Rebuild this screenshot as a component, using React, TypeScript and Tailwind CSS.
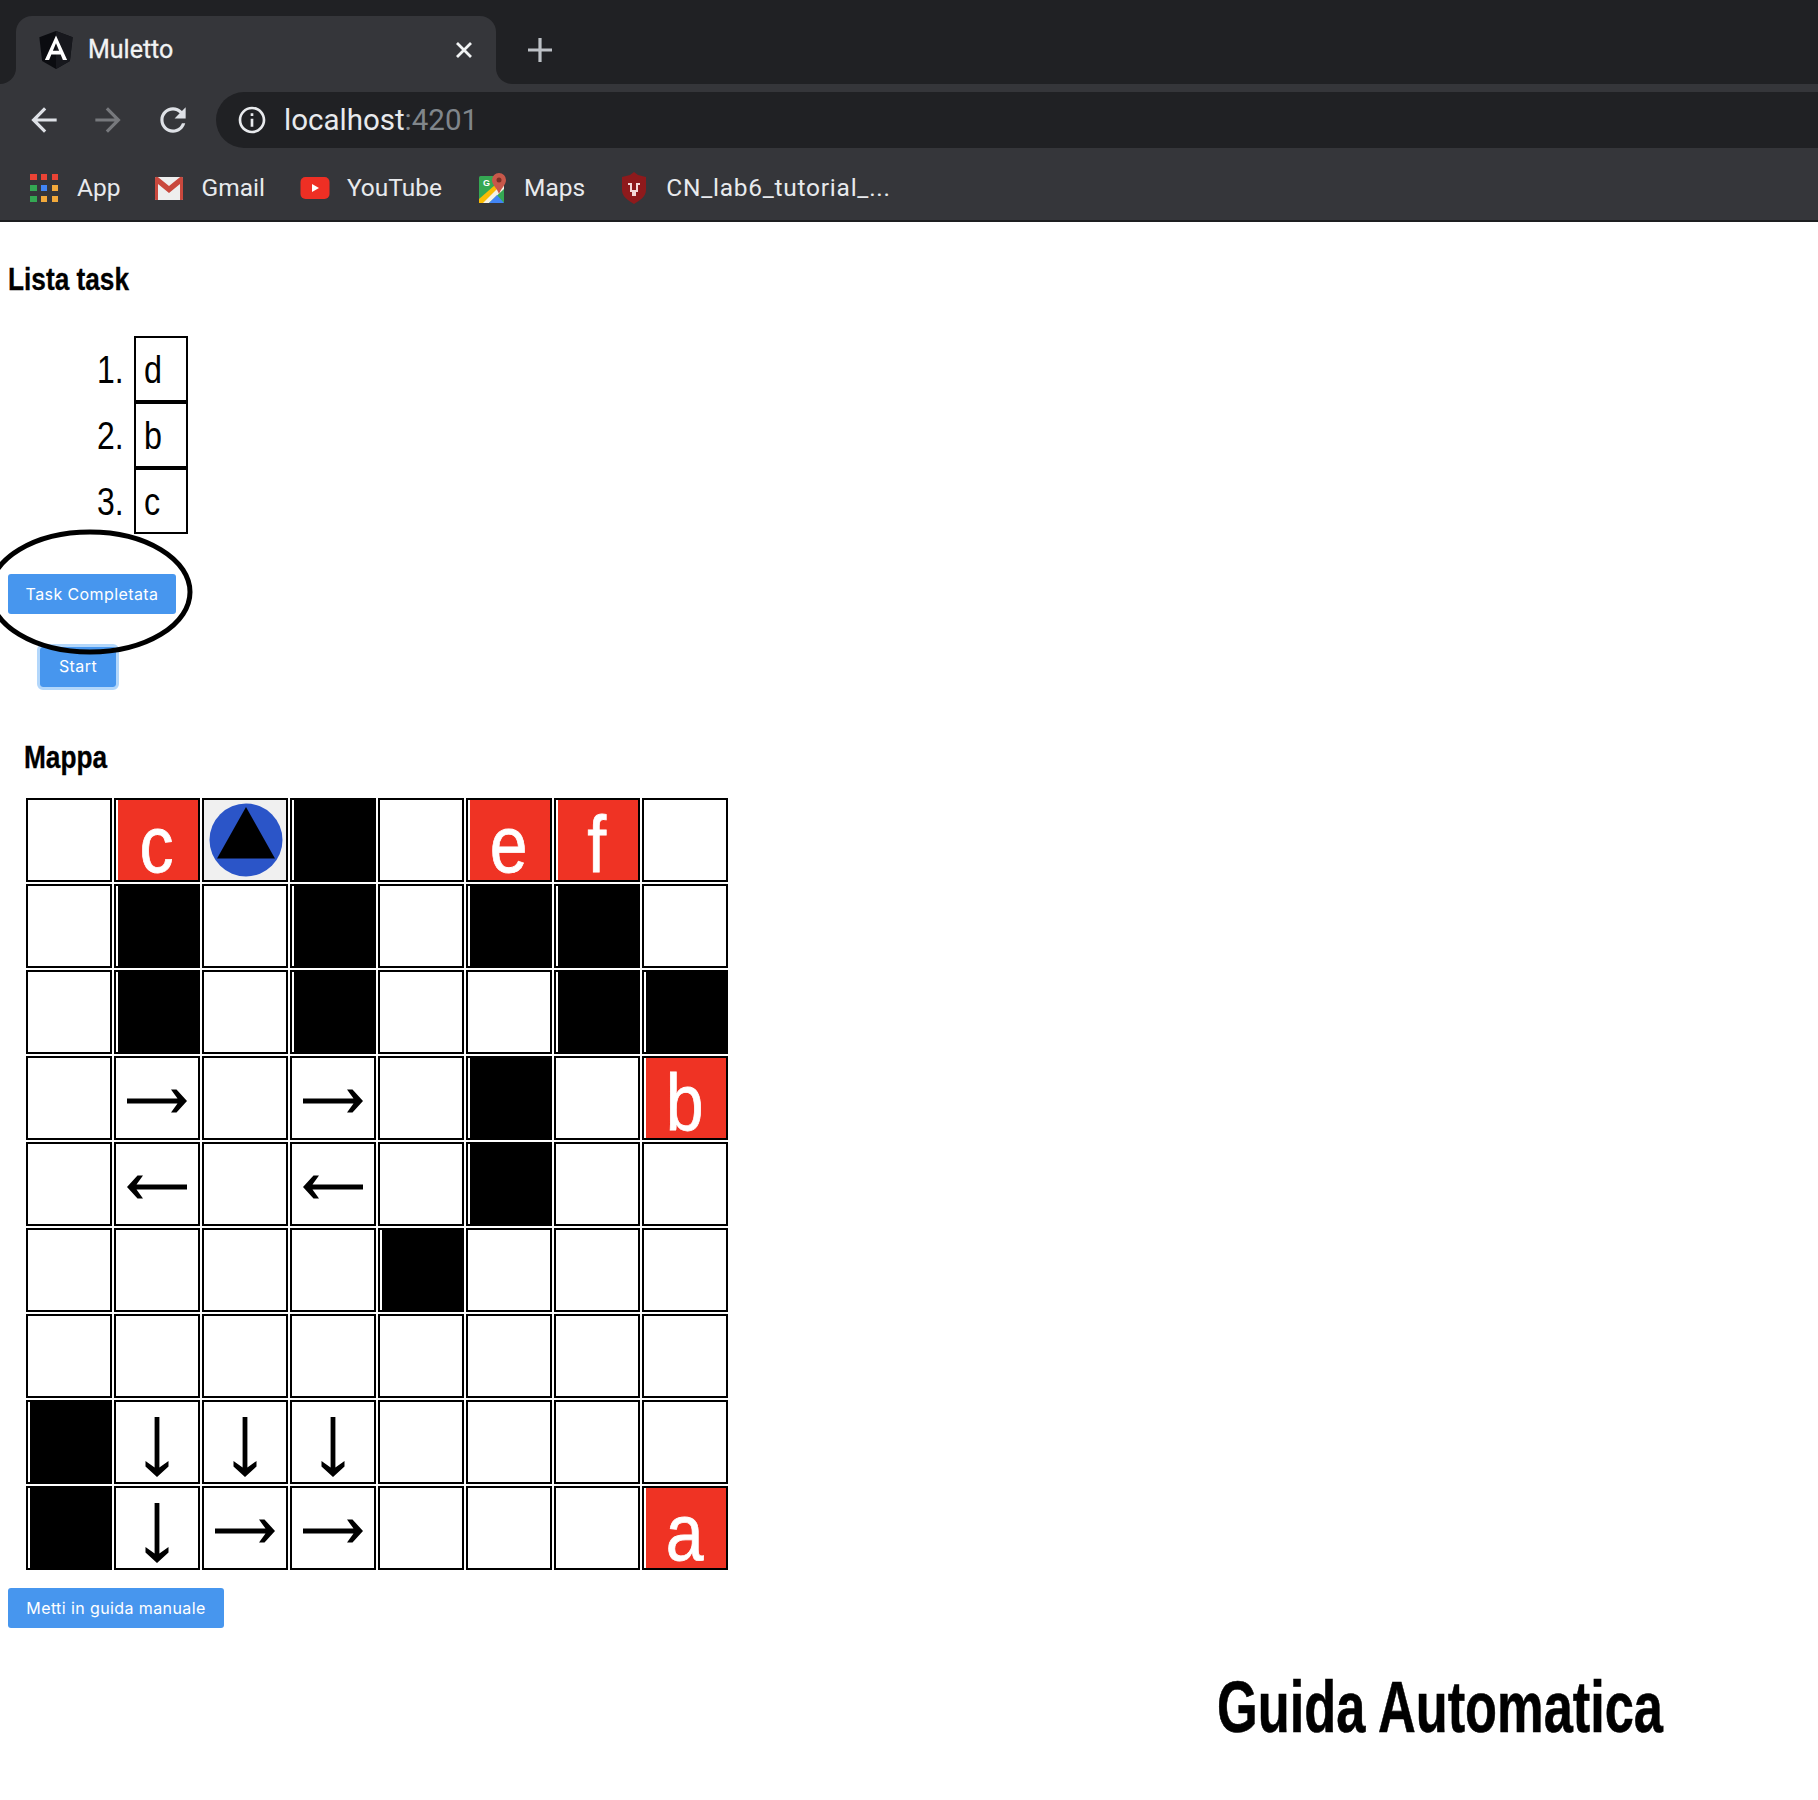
const UI_FONT = "font-['Roboto','Liberation_Sans',sans-serif]";
const PAGE_FONT = "font-['Liberation_Sans',Arial,sans-serif]";

const MAP = [
  [".", "c", "R", "#", ".", "e", "f", "."],
  [".", "#", ".", "#", ".", "#", "#", "."],
  [".", "#", ".", "#", ".", ".", "#", "#"],
  [".", ">", ".", ">", ".", "#", ".", "b"],
  [".", "<", ".", "<", ".", "#", ".", "."],
  [".", ".", ".", ".", "#", ".", ".", "."],
  [".", ".", ".", ".", ".", ".", ".", "."],
  ["#", "v", "v", "v", ".", ".", ".", "."],
  ["#", "v", ">", ">", ".", ".", ".", "a"],
];

function Arrow({ className }: { className: string }) {
  return (
    <svg width="60" height="60" viewBox="0 0 60 60" className={className}>
      <polygon points="44,18.5 49.5,18.5 60,30 49.5,41.5 44,41.5 50.5,32.4 0,32.4 0,27.6 50.5,27.6" fill="#000" />
    </svg>
  );
}

function Robot() {
  return (
    <svg width="78" height="80" viewBox="-39 -40 78 80">
      <circle cx="0" cy="0" r="36.5" fill="#2b55c8" />
      <polygon points="0,-33 -29,18.5 29,18.5" fill="#000" />
    </svg>
  );
}

function Cell({ value }: { value: string }) {
  if (value === "#" || /^[a-f]$/.test(value)) {
    const isLetter = value !== "#";
    return (
      <div className="border-2 border-black bg-white pl-0.5">
        <div className={`flex h-full justify-center ${isLetter ? "bg-[#ef3324]" : "bg-black"}`}>
          {isLetter && (
            <span className="inline-block h-[76px] -translate-x-[1.5px] translate-y-[7px] scale-x-[0.85] text-[80px] leading-[76px] text-white [-webkit-text-stroke:0.8px_#fff]">
              {value}
            </span>
          )}
        </div>
      </div>
    );
  }
  if (value === "R") {
    return (
      <div className="flex items-center justify-center border-2 border-black bg-[#f0f0f0] pl-[2px]">
        <Robot />
      </div>
    );
  }
  return (
    <div className="flex items-center justify-center border-2 border-black bg-white">
      {value === ">" && <Arrow className="translate-y-[3px]" />}
      {value === "<" && <Arrow className="translate-y-[3px] rotate-180" />}
      {value === "v" && <Arrow className="translate-y-[5px] rotate-90" />}
    </div>
  );
}

function AngularLogo() {
  return (
    <svg width="40" height="40" viewBox="0 0 36 36">
      <polygon points="18,1 33,6.5 30.5,28 18,35 5.5,28 3,6.5" fill="#0b0c10" />
      <polygon points="18,1 33,6.5 30.5,28 18,35" fill="#17181d" />
      <path d="M18 5 L8 27 h3.8 l2-5 h8.4 l2 5 H28 Z M15.2 18.6 L18 12 l2.8 6.6 Z" fill="#fff" fillRule="evenodd" />
    </svg>
  );
}

function AppsIcon() {
  const colors = ["#ea4335", "#ea4335", "#ea4335", "#34a853", "#4285f4", "#f2a93b", "#34a853", "#f2a93b", "#f2a93b"];
  return (
    <div className="grid w-7 grid-cols-3 gap-[4.5px]">
      {colors.map((c, i) => (
        <div key={i} className="h-[6.5px] w-[6.5px]" style={{ backgroundColor: c }} />
      ))}
    </div>
  );
}

function GmailIcon() {
  return (
    <svg width="30" height="26" viewBox="0 0 30 26">
      <rect x="1" y="2" width="28" height="23" rx="1.5" fill="#eeeeee" />
      <path d="M1 3.5 V24 a1 1 0 0 0 1 1 H4 V9 L15 18 L26 9 V25 H28 a1 1 0 0 0 1 -1 V3.5 C29 2 27 1 25.5 2.5 L15 11 L4.5 2.5 C3 1 1 2 1 3.5 Z" fill="#c9483d" />
    </svg>
  );
}

function YouTubeIcon() {
  return (
    <svg width="30" height="24" viewBox="0 0 30 24">
      <rect x="0.5" y="1" width="29" height="22" rx="5" fill="#ee2f24" />
      <polygon points="12,8 12,16 19,12" fill="#fff" />
    </svg>
  );
}

function MapsIcon() {
  return (
    <svg width="30" height="32" viewBox="0 0 30 32">
      <rect x="1" y="4" width="25" height="27" rx="1.5" fill="#35a853" />
      <polygon points="1,31 26,7 26,17 11,31" fill="#f5f1e6" />
      <polygon points="1,27 17,13 20,16 5,31 1,31" fill="#fbbc04" />
      <polygon points="11,31 19,23 26,31" fill="#4285f4" />
      <path d="M21 1 a7 7 0 0 1 7 7 c0 5 -5 8 -7 14 c-2 -6 -7 -9 -7 -14 a7 7 0 0 1 7 -7 Z" fill="#c8584a" />
      <circle cx="21" cy="8" r="2.5" fill="#7a2f26" />
      <text x="5" y="14" fontSize="9" fontWeight="700" fill="#fff" fontFamily="Liberation Sans">G</text>
    </svg>
  );
}

function ShieldIcon() {
  return (
    <svg width="28" height="32" viewBox="0 0 28 32">
      <path d="M14 0 L18 3 L26 5 V18 C26 25 19 29 14 32 C9 29 2 25 2 18 V5 L10 3 Z" fill="#8e1a1c" />
      <path d="M8 11 h4 v7 h4 v-7 h4 v2 h-2 v7 h-2 v4 h-4 v-4 h-2 v-7 h-2 Z" fill="#f3d9d9" />
    </svg>
  );
}

function ChromeBar() {
  return (
    <div className={`${UI_FONT} bg-[#35363a] text-white`}>
      <div className="flex h-[84px]">
        <div className="w-4 rounded-br-[16px] bg-[#202124]" />
        <div className="bg-[#202124] pt-4">
          <div className="flex h-[68px] w-[480px] items-center rounded-t-[16px] bg-[#35363a] pl-[20px] pr-[20px]">
            <AngularLogo />
            <span className="ml-[12px] text-[25px] text-[#f1f3f4] [-webkit-text-stroke:0.3px_#f1f3f4]">Muletto</span>
            <svg width="20" height="20" viewBox="0 0 20 20" className="ml-auto mr-[2px]">
              <path d="M3 3 L17 17 M17 3 L3 17" stroke="#f1f3f4" strokeWidth="2.8" />
            </svg>
          </div>
        </div>
        <div className="flex flex-1 items-center rounded-bl-[16px] bg-[#202124] pl-[31px] pt-4">
          <svg width="26" height="26" viewBox="0 0 26 26">
            <path d="M13 1 V25 M1 13 H25" stroke="#bdc1c6" strokeWidth="3.2" />
          </svg>
        </div>
      </div>

      <div className="flex h-[72px] items-center">
        <div className="flex w-[216px] items-center pl-[25px]">
          <svg width="38" height="38" viewBox="0 0 24 24" fill="#dee1e6">
            <path d="M20 11H7.83l5.59-5.59L12 4l-8 8 8 8 1.41-1.41L7.83 13H20v-2z" />
          </svg>
          <svg width="38" height="38" viewBox="0 0 24 24" fill="#77797d" className="ml-[26px]">
            <path d="M12 4l-1.41 1.41L16.17 11H4v2h12.17l-5.58 5.59L12 20l8-8z" />
          </svg>
          <svg width="38" height="38" viewBox="0 0 24 24" fill="#dee1e6" className="ml-[27px]">
            <path d="M17.65 6.35C16.2 4.9 14.21 4 12 4c-4.42 0-7.99 3.58-7.99 8s3.57 8 7.99 8c3.73 0 6.84-2.55 7.73-6h-2.08c-.82 2.33-3.04 4-5.65 4-3.31 0-6-2.69-6-6s2.69-6 6-6c1.66 0 3.14.69 4.22 1.78L13 11h7V4l-2.35 2.35z" />
          </svg>
        </div>
        <div className="flex h-[56px] flex-1 items-center rounded-l-[28px] bg-[#202124] pl-[20px]">
          <svg width="32" height="32" viewBox="0 0 24 24" fill="#e8eaed">
            <path d="M11 7h2v2h-2zm0 4h2v6h-2zm1-9C6.48 2 2 6.48 2 12s4.48 10 10 10 10-4.48 10-10S17.52 2 12 2zm0 18c-4.41 0-8-3.59-8-8s3.59-8 8-8 8 3.59 8 8-3.59 8-8 8z" />
          </svg>
          <span className="ml-[16px] text-[29.5px] text-[#e8eaed]">
            localhost<span className="text-[#80868b]">:4201</span>
          </span>
        </div>
      </div>

      <div className="flex h-[66px] items-center border-b-2 border-[#1d1e20] pl-[30px] text-[24.5px] text-[#e8eaed]">
        <AppsIcon />
        <span className="ml-[19px]">App</span>
        <div className="ml-[33px]"><GmailIcon /></div>
        <span className="ml-[18px]">Gmail</span>
        <div className="ml-[35px]"><YouTubeIcon /></div>
        <span className="ml-[17px]">YouTube</span>
        <div className="ml-[36px]"><MapsIcon /></div>
        <span className="ml-[16px]">Maps</span>
        <div className="ml-[35px]"><ShieldIcon /></div>
        <span className="ml-[18px] tracking-[0.75px]">CN_lab6_tutorial_...</span>
      </div>
    </div>
  );
}

function BlueButton({ label, className }: { label: string; className: string }) {
  return (
    <button className={`flex items-center justify-center rounded-[3px] bg-[#4796ee] font-['Inter',sans-serif] text-[16px] tracking-[0.4px] text-white ${className}`}>
      {label}
    </button>
  );
}

export default function App() {
  return (
    <div className={`${PAGE_FONT} relative min-h-[1800px] w-[1818px] overflow-hidden bg-white text-black`}>
      <ChromeBar />

      <main className="pl-2">
        <h2 className="mt-[39px] h-[36px] origin-left scale-x-[0.82] text-[32px] font-bold leading-[36px] [-webkit-text-stroke:0.3px_#000]">Lista task</h2>

        <ol className="ml-[126px] mt-[39px] w-[54px]">
          {["d", "b", "c"].map((task, i) => (
            <li key={task} className="relative flex h-[66px] items-center border-2 border-black pl-2 pt-[2px] text-[38px]">
              <span className="absolute right-[62px] inline-block origin-right scale-x-[0.84]">{i + 1}.</span>
              <span className="inline-block origin-left scale-x-[0.85]">{task}</span>
            </li>
          ))}
        </ol>

        <BlueButton label="Task Completata" className="mt-[40px] h-10 w-[168px] pb-[1px]" />

        <div className="ml-[29px] mt-[30px] w-[82px] rounded-[6px] border-[3px] border-[#b3d7fb]">
          <BlueButton label="Start" className="h-10 w-full pb-[3px]" />
        </div>

        <h2 className="ml-[16px] mt-[49px] h-[36px] origin-left scale-x-[0.82] text-[32px] font-bold leading-[36px] [-webkit-text-stroke:0.3px_#000]">Mappa</h2>

        <div className="ml-[18px] mt-[23px] grid grid-cols-[repeat(8,86px)] auto-rows-[84px] gap-0.5">
          {MAP.flat().map((value, i) => (
            <Cell key={i} value={value} />
          ))}
        </div>

        <BlueButton label="Metti in guida manuale" className="mt-[18px] h-10 w-[216px] pb-[1px]" />

        <div className="mt-[37px] pl-[1209px]">
          <h1 className="origin-left scale-x-[0.727] whitespace-nowrap text-[72px] font-bold leading-[84px] [-webkit-text-stroke:0.6px_#000]">Guida Automatica</h1>
        </div>
      </main>

      {/* hand drawn circle around the button */}
      <svg width="210" height="130" viewBox="0 0 210 130" className="absolute left-[-12px] top-[527px]">
        <ellipse cx="102" cy="65" rx="100" ry="60" fill="none" stroke="#000" strokeWidth="5" />
      </svg>
    </div>
  );
}
